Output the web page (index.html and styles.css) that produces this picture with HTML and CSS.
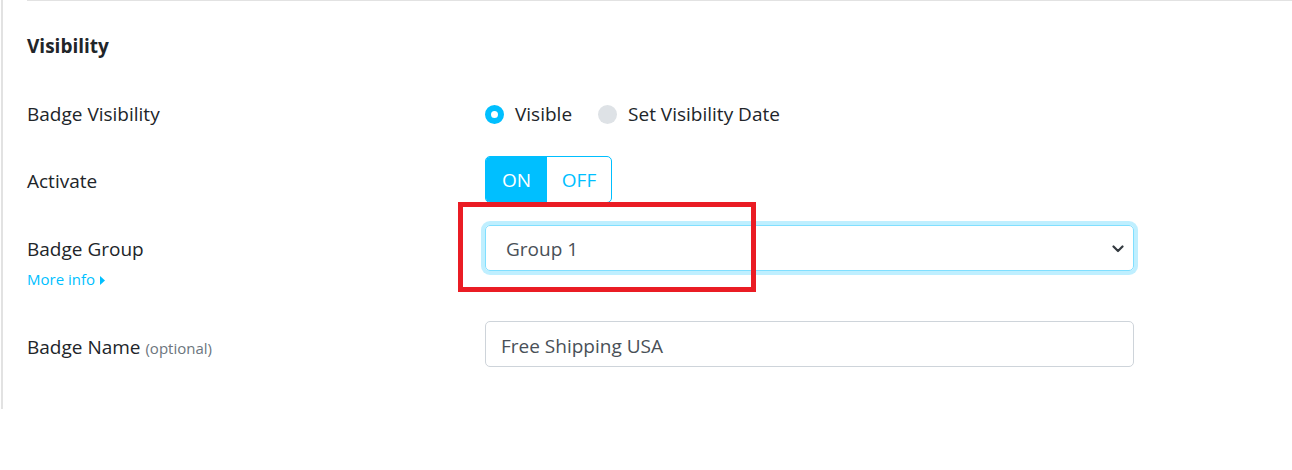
FILE: index.html
```html
<!DOCTYPE html>
<html>
<head>
<meta charset="utf-8">
<link rel="stylesheet" href="styles.css">
</head>
<body>
<div class="panel">
  <div class="section">
    <h2 class="heading">Visibility</h2>

    <div class="row row-vis">
      <div class="label">Badge Visibility</div>
      <div class="control radios">
        <span class="radio checked"></span><span class="radio-text">Visible</span>
        <span class="radio"></span><span class="radio-text">Set Visibility Date</span>
      </div>
    </div>

    <div class="row row-act">
      <div class="label">Activate</div>
      <div class="control">
        <div class="toggle"><span class="tg on">ON</span><span class="tg off">OFF</span></div>
      </div>
    </div>

    <div class="row row-group">
      <div class="label">
        <div>Badge Group</div>
        <a class="more">More info <svg width="5" height="9" viewBox="0 0 5 9"><path d="M0 0L5 4.5L0 9Z" fill="#00bfff"/></svg></a>
      </div>
      <div class="control">
        <div class="select">
          <span>Group 1</span>
          <svg class="chev" width="12" height="8" viewBox="0 0 12 8"><path d="M1.5 1.5L6 6L10.5 1.5" fill="none" stroke="#343a40" stroke-width="2.2" stroke-linecap="round" stroke-linejoin="round"/></svg>
        </div>
      </div>
    </div>

    <div class="row row-name">
      <div class="label">Badge Name <span class="opt">(optional)</span></div>
      <div class="control">
        <div class="input">Free Shipping USA</div>
      </div>
    </div>
  </div>
</div>
<div class="annot"></div>
</body>
</html>
```
FILE: styles.css
```css
html, body {
  margin: 0;
  padding: 0;
  background: #fff;
}
body {
  font-family: "Open Sans", "Noto Sans", sans-serif;
  font-size: 19px;
  color: #212529;
  position: relative;
  width: 1292px;
  height: 470px;
  overflow: hidden;
}
.panel {
  margin-left: 1px;
  border-left: 2px solid #e2e2e2;
  height: 409px;
  padding-left: 24px;
}
.section {
  border-top: 1px solid #e2e2e2;
  padding-top: 33px;
}
.heading {
  margin: 0;
  font-size: 19px;
  font-weight: 700;
  line-height: 24px;
  height: 24px;
}
.row {
  display: grid;
  grid-template-columns: 458px 649px;
  align-items: start;
}
.label {
  line-height: 24px;
}
.row-vis { margin-top: 44px; }
.row-act { margin-top: 30px; }
.row-act .label { padding-top: 13px; }
.row-group { margin-top: 22px; }
.row-group .label { padding-top: 12px; }
.row-name { margin-top: 32px; }
.row-name .label { padding-top: 14px; }

.radios {
  display: flex;
  align-items: center;
  height: 24px;
}
.radio {
  width: 19px;
  height: 19px;
  border-radius: 50%;
  background: #dee2e6;
  box-sizing: border-box;
  margin-right: 11px;
}
.radio.checked {
  background: #fff;
  border: 6px solid #00bfff;
}
.radio-text { margin-right: 26px; }

.toggle {
  display: inline-flex;
  border: 1px solid #00bfff;
  border-radius: 5px;
  overflow: hidden;
  height: 47px;
  box-sizing: border-box;
}
.tg {
  display: flex;
  align-items: center;
  justify-content: center;
  padding-top: 1px;
}
.tg.on {
  width: 61px;
  background: #00bfff;
  color: #fff;
}
.tg.off {
  width: 64px;
  color: #00bfff;
}

.more {
  display: block;
  margin-top: 8px;
  font-size: 15px;
  line-height: 20px;
  color: #00bfff;
}
.more svg { margin-left: 1px; }

.select {
  height: 46px;
  box-sizing: border-box;
  border: 1px solid #80dfff;
  border-radius: 5px;
  box-shadow: 0 0 0 4px rgba(0, 191, 255, 0.25);
  display: flex;
  align-items: center;
  justify-content: space-between;
  padding: 1px 9px 0 20px;
  color: #495057;
}
.input {
  height: 46px;
  box-sizing: border-box;
  border: 1px solid #ced4da;
  border-radius: 5px;
  display: flex;
  align-items: center;
  padding: 4px 0 0 15px;
  color: #495057;
}
.opt {
  font-size: 15px;
  color: #6c757d;
}
.annot {
  position: absolute;
  left: 458px;
  top: 202px;
  width: 298px;
  height: 90px;
  box-sizing: border-box;
  border: 5px solid #ea1c24;
}
```
